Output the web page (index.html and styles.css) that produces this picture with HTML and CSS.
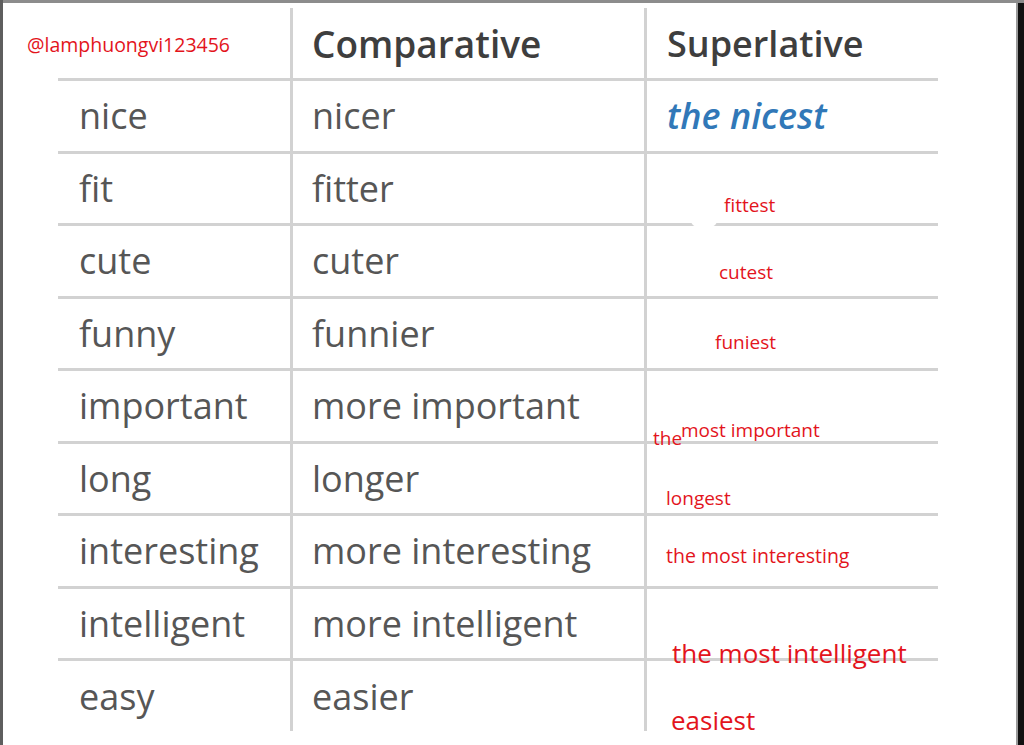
FILE: index.html
```html
<!DOCTYPE html>
<html>
<head>
<meta charset="utf-8">
<link rel="stylesheet" href="styles.css">
</head>
<body>
<div class="page">
  <div class="table">
    <div class="row head">
      <div class="cell c1"></div>
      <div class="cell c2">Comparative</div>
      <div class="cell c3">Superlative</div>
    </div>
    <div class="row"><div class="cell c1">nice</div><div class="cell c2">nicer</div><div class="cell c3"><span class="blue">the nicest</span></div></div>
    <div class="row"><div class="cell c1">fit</div><div class="cell c2">fitter</div><div class="cell c3"></div></div>
    <div class="row"><div class="cell c1">cute</div><div class="cell c2">cuter</div><div class="cell c3"></div></div>
    <div class="row"><div class="cell c1">funny</div><div class="cell c2">funnier</div><div class="cell c3"></div></div>
    <div class="row"><div class="cell c1">important</div><div class="cell c2">more important</div><div class="cell c3"></div></div>
    <div class="row"><div class="cell c1">long</div><div class="cell c2">longer</div><div class="cell c3"></div></div>
    <div class="row"><div class="cell c1">interesting</div><div class="cell c2">more interesting</div><div class="cell c3"></div></div>
    <div class="row"><div class="cell c1">intelligent</div><div class="cell c2">more intelligent</div><div class="cell c3"></div></div>
    <div class="row last"><div class="cell c1">easy</div><div class="cell c2">easier</div><div class="cell c3"></div></div>
  </div>

  <div class="patch"></div>
  <span class="note wm">@lamphuongvi123456</span>
  <span class="note n-fit">fittest</span>
  <span class="note n-cute">cutest</span>
  <span class="note n-fun">funiest</span>
  <span class="note n-the">the</span>
  <span class="note n-imp">most important</span>
  <span class="note n-long">longest</span>
  <span class="note n-int">the most interesting</span>
  <span class="note big n-intel">the most intelligent</span>
  <span class="note big n-easy">easiest</span>
</div>
</body>
</html>
```

FILE: styles.css
```css
html, body {
  margin: 0;
  padding: 0;
  background: #ffffff;
}

.page {
  position: relative;
  width: 1024px;
  height: 745px;
  box-sizing: border-box;
  padding: 8px 0 0 58px;
  background: #ffffff;
  overflow: hidden;
  box-shadow: inset 3px 0 0 #5e5e5e, inset 0 3px 0 #8c8c8c, inset -6px 0 0 #111111, inset -8px 0 0 #9a9a9a;
  font-family: "Open Sans", "Liberation Sans", sans-serif;
}

.table {
  width: 880px;
  display: flex;
  flex-direction: column;
}

.row {
  display: grid;
  grid-template-columns: 232px 354px 294px;
  height: 72.5px;
  box-sizing: border-box;
  border-bottom: 3px solid #d2d2d2;
}

.row.head {
  height: 73px;
}

.row.last {
  border-bottom: none;
  height: 70px;
}

.cell {
  display: flex;
  align-items: center;
  box-sizing: border-box;
  font-size: 36px;
  color: #565656;
  white-space: nowrap;
}

.c1 {
  padding-left: 21px;
}

.c2 {
  padding-left: 19px;
  border-left: 3px solid #d2d2d2;
}

.c3 {
  padding-left: 20px;
  border-left: 3px solid #d2d2d2;
}

.head .cell {
  font-weight: 600;
  color: #3e3e3e;
  font-size: 36px;
}

.head .c2 {
  font-size: 37px;
}

.blue {
  color: #3178b8;
  font-weight: 600;
  font-style: italic;
  font-size: 36px;
}

.patch {
  position: absolute;
  left: 690px;
  top: 196px;
  width: 28px;
  height: 32px;
  background: #ffffff;
  border-radius: 10px;
}

.note {
  position: absolute;
  color: #e3141c;
  font-size: 19px;
  line-height: 1;
  white-space: nowrap;
}

.note.big {
  font-size: 26px;
}

.wm { left: 27px; top: 35px; font-size: 19.5px; }
.n-fit { left: 724px; top: 196px; }
.n-cute { left: 719px; top: 263px; }
.n-fun { left: 715px; top: 333px; }
.n-the { left: 653px; top: 429px; }
.n-imp { left: 681px; top: 421px; }
.n-long { left: 666px; top: 489px; }
.n-int { left: 666px; top: 546px; font-size: 19.5px; }
.n-intel { left: 672px; top: 640px; }
.n-easy { left: 671px; top: 707px; font-size: 25px; }
```
